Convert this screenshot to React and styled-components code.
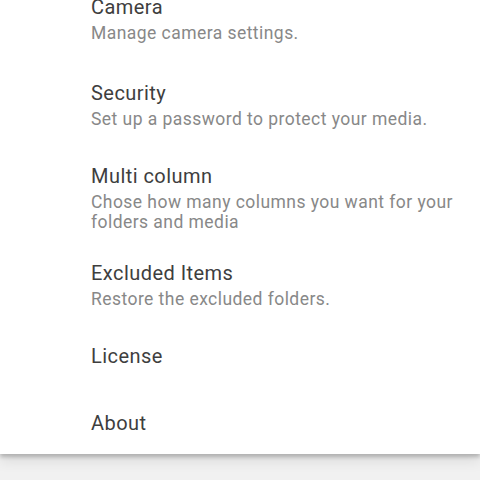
import React from "react";
import styled, { createGlobalStyle } from "styled-components";

const Global = createGlobalStyle`
  html, body { margin: 0; padding: 0; background: #f2f2f2; }
  body { font-family: Roboto, "Noto Sans", "Liberation Sans", sans-serif; }
  #root { width: 480px; height: 480px; overflow: hidden; }
`;

const Screen = styled.div`
  width: 480px;
  height: 480px;
  background: #f1f1f1;
  overflow: hidden;
`;

const Panel = styled.div`
  height: 454px;
  background: #ffffff;
  overflow: hidden;
  box-shadow: 0 3px 4px rgba(0, 0, 0, 0.22), 0 8px 12px rgba(0, 0, 0, 0.08);
  position: relative;
`;

const List = styled.ul`
  list-style: none;
  margin: -23px 0 0 0;
  padding: 0;
`;

const Item = styled.li`
  display: flex;
  flex-direction: column;
  padding: ${(p) => p.$pt}px 20px ${(p) => p.$pb}px 91px;
`;

const Title = styled.div`
  font-size: 20px;
  line-height: 24px;
  letter-spacing: 0.45px;
  color: #3e3e3e;
`;

const Summary = styled.div`
  margin-top: 4px;
  font-size: 17.5px;
  line-height: 20px;
  letter-spacing: 0.45px;
  color: #888888;
`;

const items = [
  { t: "Camera", s: "Manage camera settings.", pt: 18, pb: 19 },
  { t: "Security", s: "Set up a password to protect your media.", pt: 19, pb: 17 },
  {
    t: "Multi column",
    s: "Chose how many columns you want for your folders and media",
    pt: 18,
    pb: 10,
  },
  { t: "Excluded Items", s: "Restore the excluded folders.", pt: 19, pb: 17 },
  { t: "License", pt: 18, pb: 21 },
  { t: "About", pt: 22, pb: 19 },
];

export default function App() {
  return (
    <Screen>
      <Global />
      <Panel>
        <List>
          {items.map((it) => (
            <Item key={it.t} $pt={it.pt} $pb={it.pb}>
              <Title>{it.t}</Title>
              {it.s && <Summary>{it.s}</Summary>}
            </Item>
          ))}
        </List>
      </Panel>
    </Screen>
  );
}
